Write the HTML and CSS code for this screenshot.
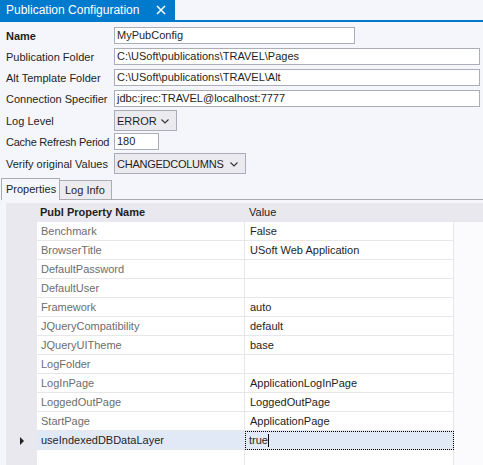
FILE: index.html
```html
<!DOCTYPE html>
<html lang="en">
<head>
    <meta charset="UTF-8">
    <title>Publication Configuration</title>
    <link rel="stylesheet" href="styles.css">
</head>
<body>
    <div class="titlebar">
        <div class="doc-tab">
            <span class="doc-title">Publication Configuration</span>
            <svg class="close" width="10" height="10" viewBox="0 0 10 10"><path d="M1 1 L9 9 M9 1 L1 9" stroke="#fff" stroke-width="1.5"/></svg>
        </div>
    </div>

    <div class="form">
        <div class="row first">
            <label class="bold">Name</label>
            <div class="input short">MyPubConfig</div>
        </div>
        <div class="row">
            <label>Publication Folder</label>
            <div class="input wide">C:\USoft\publications\TRAVEL\Pages</div>
        </div>
        <div class="row">
            <label>Alt Template Folder</label>
            <div class="input wide">C:\USoft\publications\TRAVEL\Alt</div>
        </div>
        <div class="row">
            <label>Connection Specifier</label>
            <div class="input wide">jdbc:jrec:TRAVEL@localhost:7777</div>
        </div>
        <div class="row combo-row">
            <label>Log Level</label>
            <div class="combo level">ERROR
                <svg class="chev" width="8" height="5" viewBox="0 0 8 5"><path d="M0.5 0.5 L4 4 L7.5 0.5" fill="none" stroke="#333" stroke-width="1.1"/></svg>
            </div>
        </div>
        <div class="row tight">
            <label class="cond">Cache Refresh Period</label>
            <div class="input tiny">180</div>
        </div>
        <div class="row combo-row">
            <label>Verify original Values</label>
            <div class="combo verify"><span class="cond">CHANGEDCOLUMNS</span>
                <svg class="chev" width="8" height="5" viewBox="0 0 8 5"><path d="M0.5 0.5 L4 4 L7.5 0.5" fill="none" stroke="#333" stroke-width="1.1"/></svg>
            </div>
        </div>
    </div>

    <div class="tabs">
        <div class="tab active">Properties</div>
        <div class="tab">Log Info</div>
        <div class="tab-fill"></div>
    </div>

    <div class="panel">
        <div class="grid">
            <div class="grow head">
                <div class="rh"></div>
                <div class="hc bold">Publ Property Name</div>
                <div class="hc">Value</div>
                <div></div>
            </div>
            <div id="rows"></div>
            <div class="grow newrow">
                <div class="rh"></div>
                <div class="c name"></div>
                <div class="c val"></div>
                <div></div>
            </div>
        </div>
    </div>

    <script>
        const props = [
            ['Benchmark', 'False'],
            ['BrowserTitle', 'USoft Web Application'],
            ['DefaultPassword', ''],
            ['DefaultUser', ''],
            ['Framework', 'auto'],
            ['JQueryCompatibility', 'default'],
            ['JQueryUITheme', 'base'],
            ['LogFolder', ''],
            ['LogInPage', 'ApplicationLogInPage'],
            ['LoggedOutPage', 'LoggedOutPage'],
            ['StartPage', 'ApplicationPage'],
            ['useIndexedDBDataLayer', 'true']
        ];

        const rows = document.getElementById('rows');
        props.forEach((p, i) => {
            const current = i === props.length - 1;
            const row = document.createElement('div');
            row.className = 'grow' + (current ? ' current' : '');
            row.innerHTML = `
                <div class="rh">${current ? '<span class="arrow"></span>' : ''}</div>
                <div class="c name">${p[0]}</div>
                <div class="c val">${p[1]}${current ? '<span class="caret"></span>' : ''}</div>
                <div></div>
            `;
            rows.appendChild(row);
        });
    </script>
</body>
</html>
```

FILE: styles.css
```css
body {
    margin: 0;
    background: #f5f6fb;
    color: #1e1e1e;
    font-family: "Liberation Sans", Arial, sans-serif;
    font-size: 11px;
    height: 465px;
    overflow: hidden;
}
.titlebar {
    height: 20px;
    border-bottom: 2px solid #007acc;
}
.doc-tab {
    width: 175px;
    height: 20px;
    background: #007acc;
    color: #fff;
    display: flex;
    align-items: center;
    box-sizing: border-box;
    padding-left: 6px;
}
.doc-title {
    font-size: 12px;
    flex: 1;
}
.close {
    margin-right: 9px;
}
.form {
    padding-left: 6px;
}
.row {
    display: flex;
    align-items: center;
    margin-top: 4px;
}
.row.first {
    margin-top: 5px;
}
.row.combo-row {
    margin-top: 3px;
}
.row.tight {
    margin-top: 2px;
}
.row label {
    width: 108px;
    flex: none;
    white-space: nowrap;
}
.cond {
    letter-spacing: -0.25px;
}
.bold {
    font-weight: bold;
}
.input {
    height: 17px;
    box-sizing: border-box;
    border: 1px solid #abadb8;
    background: #fff;
    padding-left: 2px;
    line-height: 15px;
    white-space: nowrap;
}
.input.short {
    width: 241px;
}
.input.wide {
    width: 366px;
}
.input.tiny {
    width: 45px;
}
.combo {
    height: 21px;
    box-sizing: border-box;
    border: 1px solid #acacb8;
    background: #ebebef;
    padding-left: 2px;
    display: flex;
    align-items: center;
    justify-content: space-between;
    padding-right: 7px;
}
.combo.level {
    width: 63px;
}
.combo.verify {
    width: 132px;
}
.chev {
    margin-top: 1px;
}
.tabs {
    display: flex;
    align-items: flex-end;
    height: 22px;
    margin-top: 4px;
}
.tab {
    height: 20px;
    box-sizing: border-box;
    border: 1px solid #acacb0;
    border-left: none;
    background: #ececf0;
    padding: 0 6px 0 5px;
    line-height: 19px;
    white-space: nowrap;
}
.tab.active {
    height: 22px;
    width: 59px;
    margin-left: 1px;
    border-left: 1px solid #acacb0;
    border-bottom: none;
    background: #f5f6fb;
    padding-left: 4px;
    line-height: 20px;
}
.tab-fill {
    flex: 1;
    border-bottom: 1px solid #acacb0;
}
.panel {
    padding: 3px 0 0 6px;
}
.grid {
    background: #fbfbfd;
}
.grow {
    display: grid;
    grid-template-columns: 31px 208px 209px 1fr;
    height: 19px;
}
.grow.head {
    background: #e8e8ee;
    line-height: 19px;
}
.hc {
    padding-left: 3px;
}
.hc + .hc {
    padding-left: 4px;
}
.rh {
    background: #e8e8ee;
    position: relative;
}
.c {
    background: #fff;
    box-sizing: border-box;
    border-bottom: 1px solid #e6e6eb;
    border-right: 1px solid #e6e6eb;
    line-height: 18px;
    white-space: nowrap;
    overflow: hidden;
}
.c.name {
    color: #6d6d6d;
    padding-left: 4px;
}
.c.val {
    padding-left: 5px;
}
.current .c {
    background: #e2e9f6;
}
.current .c.name {
    color: #1e1e1e;
}
.current .c.val {
    outline: 1px dotted #000;
    outline-offset: -1px;
    padding-left: 4px;
}
.caret {
    display: inline-block;
    width: 1px;
    height: 13px;
    background: #000;
    vertical-align: -3px;
}
.arrow {
    position: absolute;
    left: 14px;
    top: 6px;
    border-left: 4px solid #222;
    border-top: 4px solid transparent;
    border-bottom: 4px solid transparent;
}
.newrow {
    height: 30px;
}
.newrow .c {
    border-bottom: none;
}
```
